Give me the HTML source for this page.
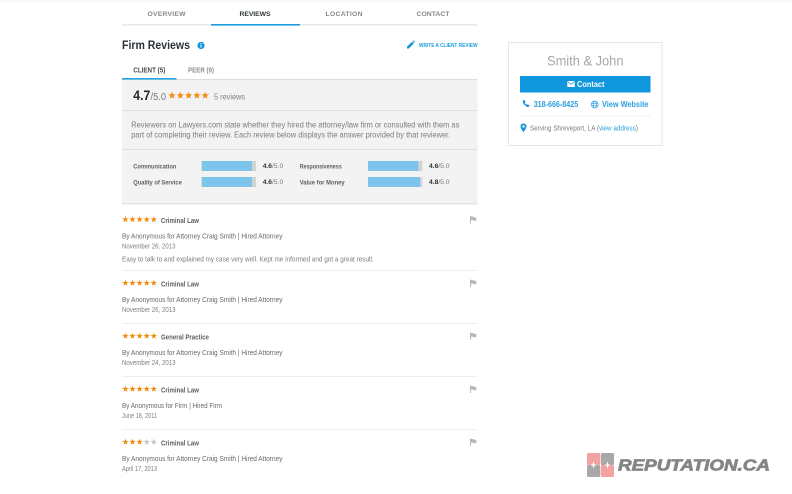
<!DOCTYPE html>
<html><head><meta charset="utf-8"><style>
html,body{margin:0;padding:0;background:#fff;width:792px;height:494px;overflow:hidden}
svg{display:block;filter:blur(.3px)}
text{font-family:"Liberation Sans",sans-serif;white-space:pre}
.nav{font-size:6.8px;font-weight:bold;fill:#85898b}
.lab{font-size:6.5px;font-weight:bold;fill:#5a5f63}
.val{font-size:6.8px;fill:#777}
.val tspan{font-weight:bold;fill:#2d3436}
.cat{font-size:7.3px;font-weight:bold;fill:#5c6063}
.by{font-size:7.3px;fill:#65696c}
.dt{font-size:7.2px;fill:#7b7f82}
.ln{fill:#eeeeee}
.flag{fill:#b5b7b8}
</style></head><body>
<svg width="792" height="494" viewBox="0 0 792 494" xmlns="http://www.w3.org/2000/svg">
<defs>
<polygon id="s" points="3.4,.1 4.19,2.41 6.63,2.45 4.68,3.92 5.4,6.25 3.4,4.85 1.4,6.25 2.12,3.92 .17,2.45 2.61,2.41"/>
<g id="f5" fill="#f28c0f"><use href="#s"/><use href="#s" x="7.1"/><use href="#s" x="14.2"/><use href="#s" x="21.3"/><use href="#s" x="28.4"/></g>
<path id="fl" d="M0 0h1v7.5h-1zM1 .5h2.2l.5.7h2.6v3.6h-2.5l-.5-.7h-2.3z"/>
</defs>
<rect width="792" height="494" fill="#fff"/>
<rect width="792" height="2" fill="#f4f9fc"/>

<!-- top tabs -->
<text class="nav" x="147.5" y="16" textLength="38" lengthAdjust="spacing">OVERVIEW</text>
<text class="nav" x="239.5" y="16" textLength="31" lengthAdjust="spacing" style="fill:#33393d">REVIEWS</text>
<text class="nav" x="325.5" y="16" textLength="37" lengthAdjust="spacing">LOCATION</text>
<text class="nav" x="416.5" y="16" textLength="33" lengthAdjust="spacing">CONTACT</text>
<rect x="122" y="24" width="355.5" height="1.6" fill="#e8e8e8"/>
<rect x="211" y="24" width="89" height="1.6" fill="#1b9ddf"/>

<!-- heading -->
<text x="122" y="49" font-size="11.5" font-weight="bold" fill="#2b3338" textLength="68" lengthAdjust="spacingAndGlyphs">Firm Reviews</text>
<circle cx="201" cy="45.5" r="3.6" fill="#1592dc"/>
<rect x="200.5" y="44.5" width="1" height="3" fill="#fff"/><rect x="200.5" y="43" width="1" height="1" fill="#fff"/>
<path d="M407 48.5v-1.8l5-5 1.8 1.8-5 5zM412.6 41.1l.8-.8 1.6 1.6-.8.8z" fill="#1592dc"/>
<text x="419" y="46.9" font-size="5.3" font-weight="bold" fill="#1b9ddf" textLength="58.5" lengthAdjust="spacingAndGlyphs">WRITE A CLIENT REVIEW</text>

<!-- sub tabs -->
<text x="133.3" y="72.4" font-size="7.4" font-weight="bold" fill="#454b4f" textLength="32" lengthAdjust="spacingAndGlyphs">CLIENT (5)</text>
<text x="188" y="72.4" font-size="7.4" font-weight="bold" fill="#8c9092" textLength="26" lengthAdjust="spacingAndGlyphs">PEER (9)</text>

<!-- grey box -->
<rect x="122" y="79" width="355.5" height="125" fill="#f3f3f3"/>
<rect x="122" y="79" width="355.5" height="1" fill="#dcdcdc"/>
<rect x="122" y="78" width="54.5" height="1.6" fill="#2ba3e0"/>
<text x="133.3" y="100" font-size="13.5" font-weight="bold" fill="#22292d" textLength="17" lengthAdjust="spacingAndGlyphs">4.7</text>
<text x="150.5" y="100" font-size="10" fill="#777b7e" textLength="15.5" lengthAdjust="spacingAndGlyphs">/5.0</text>
<g transform="translate(168,91.4) scale(1.17)"><use href="#f5"/></g>
<text x="214" y="99.4" font-size="8" fill="#7c8083" textLength="31" lengthAdjust="spacingAndGlyphs">5 reviews</text>
<rect x="122" y="110" width="355.5" height="1" fill="#dfdfdf"/>
<text x="131.3" y="127.6" font-size="7.8" fill="#797d80" textLength="328" lengthAdjust="spacingAndGlyphs">Reviewers on Lawyers.com state whether they hired the attorney/law firm or consulted with them as</text>
<text x="131.3" y="137.6" font-size="7.8" fill="#797d80" textLength="319" lengthAdjust="spacingAndGlyphs">part of completing their review. Each review below displays the answer provided by that reviewer.</text>
<rect x="122" y="149" width="355.5" height="1" fill="#dfdfdf"/>
<rect x="122" y="203" width="355.5" height="1.4" fill="#e3e3e3"/>

<!-- rating bars -->
<text class="lab" x="133.3" y="168.4" textLength="43" lengthAdjust="spacingAndGlyphs">Communication</text>
<text class="lab" x="133.3" y="184.4" textLength="48.5" lengthAdjust="spacingAndGlyphs">Quality of Service</text>
<text class="lab" x="299.7" y="168.4" textLength="42" lengthAdjust="spacingAndGlyphs">Responsiveness</text>
<text class="lab" x="299.7" y="184.4" textLength="45" lengthAdjust="spacingAndGlyphs">Value for Money</text>
<rect x="201.7" y="161" width="54.3" height="10" fill="#cfd4d7"/><rect x="201.7" y="161" width="50.3" height="10" fill="#7ec3e9"/>
<rect x="201.7" y="177" width="54.3" height="10" fill="#cfd4d7"/><rect x="201.7" y="177" width="50.3" height="10" fill="#7ec3e9"/>
<rect x="368" y="161" width="54.3" height="10" fill="#cfd4d7"/><rect x="368" y="161" width="50.3" height="10" fill="#7ec3e9"/>
<rect x="368" y="177" width="54.3" height="10" fill="#cfd4d7"/><rect x="368" y="177" width="52" height="10" fill="#7ec3e9"/>
<text class="val" x="262.7" y="168" textLength="20.5" lengthAdjust="spacingAndGlyphs"><tspan>4.6</tspan>/5.0</text>
<text class="val" x="262.7" y="184" textLength="20.5" lengthAdjust="spacingAndGlyphs"><tspan>4.6</tspan>/5.0</text>
<text class="val" x="429" y="168" textLength="20.5" lengthAdjust="spacingAndGlyphs"><tspan>4.6</tspan>/5.0</text>
<text class="val" x="429" y="184" textLength="20.5" lengthAdjust="spacingAndGlyphs"><tspan>4.8</tspan>/5.0</text>

<!-- review 1 -->
<use href="#f5" x="122" y="216"/>
<text class="cat" x="161" y="222.8" textLength="38" lengthAdjust="spacingAndGlyphs">Criminal Law</text>
<use href="#fl" class="flag" x="470" y="216"/>
<text class="by" x="122" y="238.4" textLength="160.5" lengthAdjust="spacingAndGlyphs">By Anonymous for Attorney Craig Smith | Hired Attorney</text>
<text class="dt" x="122" y="248.6" textLength="53.5" lengthAdjust="spacingAndGlyphs">November 26, 2013</text>
<text class="by" x="122" y="261.6" textLength="252" lengthAdjust="spacingAndGlyphs" style="fill:#7b7f82">Easy to talk to and explained my case very well. Kept me informed and got a great result.</text>
<rect class="ln" x="122" y="270" width="355.5" height="1"/>

<!-- review 2 -->
<use href="#f5" x="122" y="279.5"/>
<text class="cat" x="161" y="286.4" textLength="38" lengthAdjust="spacingAndGlyphs">Criminal Law</text>
<use href="#fl" class="flag" x="470" y="279.5"/>
<text class="by" x="122" y="302" textLength="160.5" lengthAdjust="spacingAndGlyphs">By Anonymous for Attorney Craig Smith | Hired Attorney</text>
<text class="dt" x="122" y="312.2" textLength="53.5" lengthAdjust="spacingAndGlyphs">November 26, 2013</text>
<rect class="ln" x="122" y="323" width="355.5" height="1"/>

<!-- review 3 -->
<use href="#f5" x="122" y="332.5"/>
<text class="cat" x="161" y="339.4" textLength="48" lengthAdjust="spacingAndGlyphs">General Practice</text>
<use href="#fl" class="flag" x="470" y="332.5"/>
<text class="by" x="122" y="355" textLength="160.5" lengthAdjust="spacingAndGlyphs">By Anonymous for Attorney Craig Smith | Hired Attorney</text>
<text class="dt" x="122" y="365.2" textLength="53.5" lengthAdjust="spacingAndGlyphs">November 24, 2013</text>
<rect class="ln" x="122" y="376" width="355.5" height="1"/>

<!-- review 4 -->
<use href="#f5" x="122" y="385.5"/>
<text class="cat" x="161" y="392.4" textLength="38" lengthAdjust="spacingAndGlyphs">Criminal Law</text>
<use href="#fl" class="flag" x="470" y="385.5"/>
<text class="by" x="122" y="408" textLength="100" lengthAdjust="spacingAndGlyphs">By Anonymous for Firm | Hired Firm</text>
<text class="dt" x="122" y="418.2" textLength="35" lengthAdjust="spacingAndGlyphs">June 18, 2011</text>
<rect class="ln" x="122" y="429" width="355.5" height="1"/>

<!-- review 5 -->
<g fill="#f28c0f"><use href="#s" x="122" y="438.5"/><use href="#s" x="129.1" y="438.5"/><use href="#s" x="136.2" y="438.5"/></g>
<g fill="#c4c6c7"><use href="#s" x="143.3" y="438.5"/><use href="#s" x="150.4" y="438.5"/></g>
<text class="cat" x="161" y="445.4" textLength="38" lengthAdjust="spacingAndGlyphs">Criminal Law</text>
<use href="#fl" class="flag" x="470" y="438.5"/>
<text class="by" x="122" y="461" textLength="160.5" lengthAdjust="spacingAndGlyphs">By Anonymous for Attorney Craig Smith | Hired Attorney</text>
<text class="dt" x="122" y="471.2" textLength="35" lengthAdjust="spacingAndGlyphs">April 17, 2013</text>

<!-- card -->
<rect x="508.5" y="42.5" width="153.5" height="103" fill="#fff" stroke="#e6e6e6"/>
<text x="547" y="65.5" font-size="13.5" fill="#a4a8a9" textLength="76.5" lengthAdjust="spacingAndGlyphs">Smith &amp; John</text>
<rect x="520" y="76" width="130.5" height="16.5" fill="#0f96dc"/>
<rect x="567.3" y="81" width="7.5" height="6" rx=".6" fill="#fff"/>
<path d="M567.6 81.6l3.5 2.6 3.5-2.6" fill="none" stroke="#0f96dc" stroke-width=".7"/>
<text x="577" y="87.1" font-size="8" font-weight="bold" fill="#fff" textLength="27.5" lengthAdjust="spacingAndGlyphs">Contact</text>
<path d="M523 100.7c-.5.5-.3 2 1.2 3.8 1.6 1.9 3.4 3 4.3 2.4l1.2-1.1-2.1-1.6-.9.6c-.6-.2-1.8-1.6-1.9-2.3l.7-.8-1.2-2z" fill="#1592dc"/>
<text x="533.7" y="107" font-size="8" font-weight="bold" fill="#2a9fdf" textLength="44.5" lengthAdjust="spacingAndGlyphs">318-666-8425</text>
<g fill="none" stroke="#2a9fdf" stroke-width=".7"><circle cx="594.7" cy="104.5" r="3.4"/><ellipse cx="594.7" cy="104.5" rx="1.5" ry="3.4"/><path d="M591.3 103.3h6.8M591.3 105.7h6.8"/></g>
<text x="602" y="107" font-size="8" font-weight="bold" fill="#2a9fdf" textLength="46.5" lengthAdjust="spacingAndGlyphs">View Website</text>
<rect x="520" y="115.5" width="130.5" height="1" fill="#f0f0f0"/>
<path d="M523.5 123.5c-1.8 0-3 1.3-3 2.9 0 2 3 5.8 3 5.8s3-3.8 3-5.8c0-1.6-1.2-2.9-3-2.9zm0 1.8a1.2 1.2 0 1 1 0 2.4 1.2 1.2 0 0 1 0-2.4z" fill="#1592dc" fill-rule="evenodd"/>
<text x="530" y="130.4" font-size="7.2" fill="#777b7e" textLength="108" lengthAdjust="spacingAndGlyphs">Serving Shreveport, LA (<tspan fill="#2a9fdf">view address</tspan>)</text>

<!-- watermark -->
<rect x="587" y="453" width="13.2" height="12" rx="1.5" fill="#f2a3a1"/>
<rect x="600.8" y="453" width="13.2" height="12" rx="1.5" fill="#a8a8a8"/>
<rect x="587" y="465" width="13.2" height="12" rx="1.5" fill="#a8a8a8"/>
<rect x="600.8" y="465" width="13.2" height="12" rx="1.5" fill="#f2a3a1"/>
<path d="M593.5 461l.8 3.3 2.6.7-2.6.7-.8 3.3-.8-3.3-2.6-.7 2.6-.7zM607.5 461l.8 3.3 2.6.7-2.6.7-.8 3.3-.8-3.3-2.6-.7 2.6-.7z" fill="#fff"/>
<text x="618" y="470.3" font-size="15.5" font-weight="bold" font-style="italic" fill="#858585" stroke="#858585" stroke-width=".7" textLength="152" lengthAdjust="spacingAndGlyphs">REPUTATION.CA</text>
</svg>
</body></html>
